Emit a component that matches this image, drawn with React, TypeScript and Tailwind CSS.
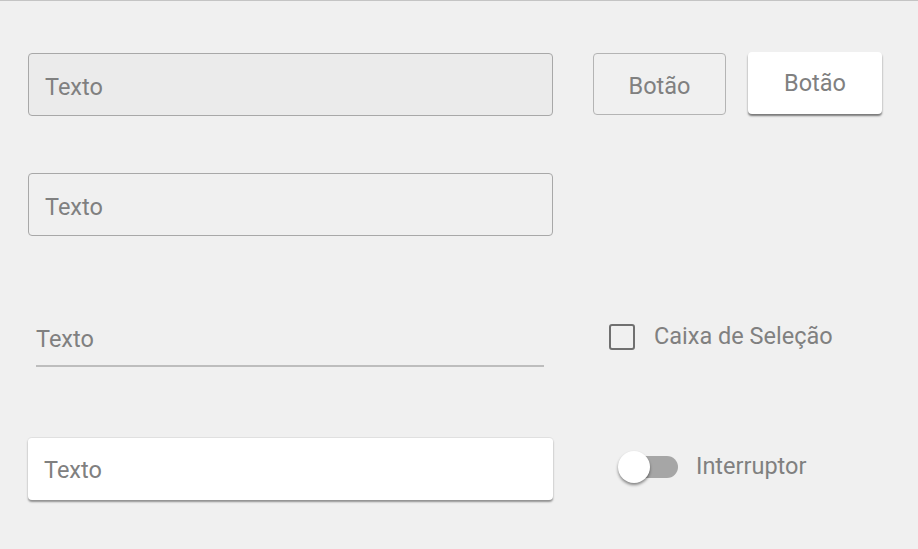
import React from "react";

const font = { fontFamily: "Roboto, 'Liberation Sans', sans-serif" };

const App: React.FC = () => {
  return (
    <div
      style={font}
      className="w-[918px] h-[549px] bg-[#f0f0f0] border-t border-[#c4c4c4] pl-[28px] pt-[52px] text-[#808080] text-[23.5px] overflow-hidden"
    >
      {/* row 1 */}
      <div className="flex items-start">
        <div className="w-[525px] h-[63px] rounded-[4px] border border-[#a8a8a8] bg-[#ebebeb] flex items-center pl-[16px] pt-[6px]">
          Texto
        </div>
        <button className="ml-[40px] w-[133px] h-[62px] rounded-[4px] border border-[#b4b4b4] flex items-center justify-center pt-[5px]">
          Botão
        </button>
        <button className="ml-[22px] -mt-px w-[134px] h-[62px] rounded-[4px] bg-white shadow-[0_2px_2px_rgba(0,0,0,0.5)] flex items-center justify-center pt-[2px]">
          Botão
        </button>
      </div>

      {/* row 2 */}
      <div className="mt-[57px] w-[525px] h-[63px] rounded-[4px] border border-[#a8a8a8] flex items-center pl-[16px] pt-[6px]">
        Texto
      </div>

      {/* row 3 */}
      <div className="mt-[67px] flex items-start">
        <div className="ml-[8px] w-[508px] h-[64px] border-b-2 border-[#bdbdbd] flex items-end pb-[8px]">
          Texto
        </div>
        <label className="ml-[65px] mt-[16px] flex items-center">
          <span className="w-[26px] h-[26px] rounded-[3px] border-[2.5px] border-[#707070]" />
          <span className="ml-[19px]">Caixa de Seleção</span>
        </label>
      </div>

      {/* row 4 */}
      <div className="mt-[70px] flex items-center">
        <div className="w-[525px] h-[63px] rounded-[4px] bg-white border-t border-[#e0e0e0] shadow-[0_2px_2px_rgba(0,0,0,0.4)] flex items-center pl-[16px] pt-[4px]">
          Texto
        </div>
        <div className="ml-[65px] -mt-[3px] flex items-center">
          <div className="relative w-[58px] h-[22px] rounded-full bg-[#a6a6a6] ml-[2px]">
            <span className="absolute -left-[2px] -top-[5px] w-[32px] h-[32px] rounded-full bg-white shadow-[0_2px_3px_rgba(0,0,0,0.45)]" />
          </div>
          <span className="ml-[18px]">Interruptor</span>
        </div>
      </div>
    </div>
  );
};

export default App;
